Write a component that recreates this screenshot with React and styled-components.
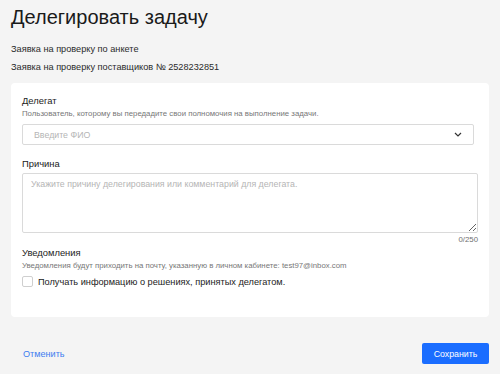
import React, { useState } from "react";
import styled, { createGlobalStyle } from "styled-components";

const GlobalStyle = createGlobalStyle`
    * { box-sizing: border-box; }
    html, body {
        margin: 0;
        padding: 0;
        background: #f4f4f4;
        font-family: "Liberation Sans", Arial, sans-serif;
        color: #1f1f1f;
    }
`;

const Page = styled.div`
    width: 500px;
    height: 374px;
    padding: 5px 11px 0 11px;
    display: flex;
    flex-direction: column;
`;

const Title = styled.h1`
    margin: 0;
    font-size: 20px;
    font-weight: 400;
    line-height: 24px;
    color: #1a1a1a;
`;

const Requests = styled.div`
    margin-top: 11px;
    display: flex;
    flex-direction: column;
`;

const RequestLine = styled.div`
    font-size: 9.2px;
    line-height: 18px;
    color: #2a2a2a;
`;

const Card = styled.div`
    margin-top: 7px;
    height: 234px;
    background: #fff;
    border-radius: 4px;
    padding: 11px 11px 0 11px;
`;

const Section = styled.div`
    display: flex;
    flex-direction: column;
    margin-top: ${({ gap }) => gap || 0}px;
`;

const Label = styled.div`
    font-size: 9.4px;
    line-height: 13px;
    color: #222;
`;

const Hint = styled.div`
    font-size: 7.8px;
    line-height: 13px;
    color: #777;
`;

const Select = styled.div`
    margin-top: 4px;
    width: 452px;
    height: 21px;
    border: 1px solid #dadada;
    border-radius: 2px;
    display: flex;
    align-items: center;
    justify-content: space-between;
    padding: 0 11px;
`;

const Placeholder = styled.span`
    font-size: 8.8px;
    color: #b5b5b5;
`;

const Chevron = () => (
    <svg width="8" height="5" viewBox="0 0 8 5">
        <path d="M1 1l3 3 3-3" fill="none" stroke="#333" strokeWidth="1.2" />
    </svg>
);

const TextArea = styled.textarea`
    margin-top: 3px;
    width: 456px;
    height: 60px;
    border: 1px solid #dadada;
    border-radius: 2px;
    padding: 5px 8px;
    font-family: "Liberation Sans", Arial, sans-serif;
    font-size: 8.8px;
    resize: vertical;
    outline: none;
    &::placeholder {
        color: #b5b5b5;
    }
`;

const Counter = styled.div`
    width: 456px;
    text-align: right;
    font-size: 7.8px;
    line-height: 13px;
    color: #6f6f6f;
`;

const CheckRow = styled.label`
    margin-top: 4px;
    display: flex;
    align-items: center;
    gap: 5px;
    font-size: 9.2px;
    color: #222;
    cursor: pointer;
`;

const Box = styled.span`
    width: 11px;
    height: 11px;
    border: 1px solid #cfcfcf;
    border-radius: 2px;
    background: ${({ checked }) => (checked ? "#1a6dff" : "#fff")};
`;

const Footer = styled.div`
    margin-top: 26px;
    display: flex;
    align-items: center;
    justify-content: space-between;
`;

const CancelLink = styled.a`
    margin-left: 12px;
    font-size: 9.1px;
    color: #3d7df0;
    cursor: pointer;
`;

const SaveBtn = styled.button`
    width: 67px;
    height: 21px;
    border: none;
    border-radius: 2px;
    background: #1a6dff;
    color: #fff;
    font-family: "Liberation Sans", Arial, sans-serif;
    font-size: 8.8px;
    cursor: pointer;
`;

export default function App() {
    const [checked, setChecked] = useState(false);
    return (
        <>
            <GlobalStyle />
            <Page>
                <Title>Делегировать задачу</Title>
                <Requests>
                    <RequestLine>Заявка на проверку по анкете</RequestLine>
                    <RequestLine>Заявка на проверку поставщиков № 2528232851</RequestLine>
                </Requests>
                <Card>
                    <Section>
                        <Label>Делегат</Label>
                        <Hint>Пользователь, которому вы передадите свои полномочия на выполнение задачи.</Hint>
                        <Select>
                            <Placeholder>Введите ФИО</Placeholder>
                            <Chevron />
                        </Select>
                    </Section>
                    <Section gap={12}>
                        <Label>Причина</Label>
                        <TextArea placeholder="Укажите причину делегирования или комментарий для делегата." />
                        <Counter>0/250</Counter>
                    </Section>
                    <Section>
                        <Label>Уведомления</Label>
                        <Hint>Уведомления будут приходить на почту, указанную в личном кабинете: test97@inbox.com</Hint>
                        <CheckRow onClick={() => setChecked(!checked)}>
                            <Box checked={checked} />
                            Получать информацию о решениях, принятых делегатом.
                        </CheckRow>
                    </Section>
                </Card>
                <Footer>
                    <CancelLink>Отменить</CancelLink>
                    <SaveBtn>Сохранить</SaveBtn>
                </Footer>
            </Page>
        </>
    );
}
